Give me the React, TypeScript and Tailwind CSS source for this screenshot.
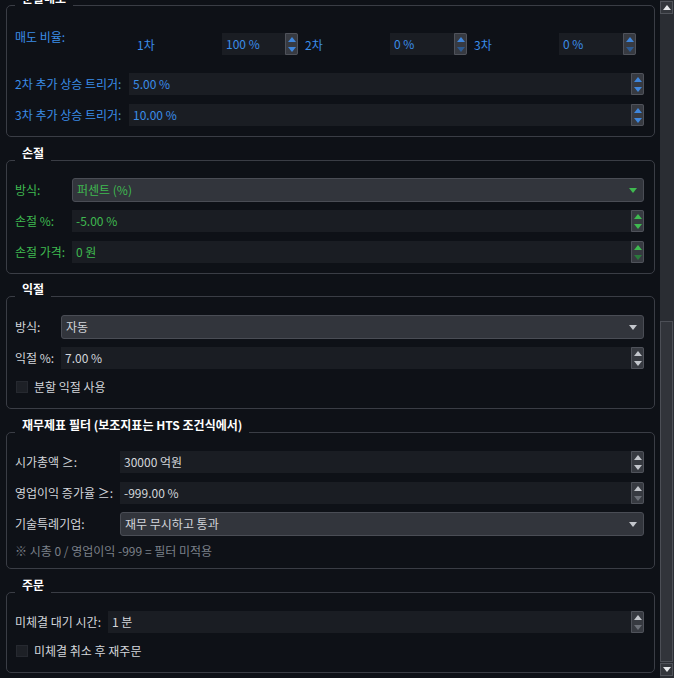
import React from "react"

type Tone = "blue" | "green" | "gray"

const textTone: Record<Tone, string> = {
  blue: "text-[#3b8de8]",
  green: "text-[#3fb950]",
  gray: "text-[#d3d6db]",
}

const arrowOn: Record<Tone, string> = {
  blue: "#3f86dc",
  green: "#3fb950",
  gray: "#c3c6cc",
}

const arrowOff: Record<Tone, string> = {
  blue: "#2c5a92",
  green: "#2a7a3c",
  gray: "#6c7078",
}

function Tri({ up, color }: { up?: boolean; color: string }) {
  return (
    <svg width="8" height="5" viewBox="0 0 8 5" className="block">
      <polygon points={up ? "0,5 8,5 4,0" : "0,0 8,0 4,5"} fill={color} />
    </svg>
  )
}

function Spin({ value, tone, downOff, upOff, className = "" }: { value: string; tone: Tone; downOff?: boolean; upOff?: boolean; className?: string }) {
  return (
    <div className={`flex h-[22px] bg-[#1a1d23] ${className}`}>
      <div className={`flex-1 flex items-center pl-[4px] ${textTone[tone]}`}>{value}</div>
      <div className="w-[13px] h-full flex flex-col items-center justify-center gap-[5px] bg-[#373a41] border border-[#4f525a] rounded-r-[2px]">
        <Tri up color={upOff ? arrowOff[tone] : arrowOn[tone]} />
        <Tri color={downOff ? arrowOff[tone] : arrowOn[tone]} />
      </div>
    </div>
  )
}

function Combo({ value, tone }: { value: string; tone: Tone }) {
  return (
    <div className={`flex-1 flex items-center h-[24px] pl-[4px] pr-[6px] bg-[#32353c] border border-[#4a4d55] rounded-[3px] ${textTone[tone]}`}>
      <span className="flex-1">{value}</span>
      <Tri color={arrowOn[tone]} />
    </div>
  )
}

function Group({ title, className = "", children }: { title: string; className?: string; children: React.ReactNode }) {
  return (
    <div className={`relative border border-[#3a3d45] rounded-[5px] pl-[8px] pr-[10px] ${className}`}>
      <div className="absolute left-[8px] top-[-16px] px-[7px] bg-[#0e1117] text-white font-bold leading-[16px]">{title}</div>
      {children}
    </div>
  )
}

function Row({ label, width, tone, children }: { label: string; width: string; tone: Tone; children: React.ReactNode }) {
  return (
    <div className="flex items-center">
      <div className={`${width} shrink-0 ${textTone[tone]}`}>{label}</div>
      {children}
    </div>
  )
}

function Check({ label }: { label: string }) {
  return (
    <div className="flex items-center h-[16px]">
      <div className="w-[12px] h-[12px] ml-[1px] bg-[#1d2026] border border-[#262930]" />
      <span className="ml-[6px] text-[#d3d6db]">{label}</span>
    </div>
  )
}

export default function App() {
  return (
    <div
      className="w-[674px] h-[678px] flex bg-[#0e1117] overflow-hidden text-[12px] leading-[16px]"
      style={{ fontFamily: "'Noto Sans CJK KR', 'Noto Sans', sans-serif" }}
    >
      <div className="w-[660px] pl-[6px] pr-[5px] pt-[5px]">
        <Group title="분할매도" className="pt-[27px] pb-[10px]">
          <div className="flex items-center h-[22px] text-[#3b8de8]">
            <div className="w-[122px] self-start -mt-[4px]">매도 비율:</div>
            <div className="w-[85px] pt-[2px]">1차</div>
            <Spin value="100 %" tone="blue" className="w-[76px]" />
            <div className="w-[85px] ml-[7px] pt-[2px]">2차</div>
            <Spin value="0 %" tone="blue" downOff className="w-[77px]" />
            <div className="w-[85px] ml-[7px] pt-[2px]">3차</div>
            <Spin value="0 %" tone="blue" downOff className="w-[77px]" />
          </div>
          <div className="mt-[18px] flex flex-col gap-[9px]">
            <Row label="2차 추가 상승 트리거:" width="w-[114px]" tone="blue">
              <Spin value="5.00 %" tone="blue" className="flex-1" />
            </Row>
            <Row label="3차 추가 상승 트리거:" width="w-[114px]" tone="blue">
              <Spin value="10.00 %" tone="blue" className="flex-1" />
            </Row>
          </div>
        </Group>

        <Group title="손절" className="mt-[23px] pt-[17px] pb-[10px]">
          <Row label="방식:" width="w-[57px]" tone="green">
            <Combo value="퍼센트 (%)" tone="green" />
          </Row>
          <div className="mt-[8px] flex flex-col gap-[9px]">
            <Row label="손절 %:" width="w-[57px]" tone="green">
              <Spin value="-5.00 %" tone="green" className="flex-1" />
            </Row>
            <Row label="손절 가격:" width="w-[57px]" tone="green">
              <Spin value="0 원" tone="green" downOff className="flex-1" />
            </Row>
          </div>
        </Group>

        <Group title="익절" className="mt-[22px] pt-[18px] pb-[13px]">
          <Row label="방식:" width="w-[46px]" tone="gray">
            <Combo value="자동" tone="gray" />
          </Row>
          <div className="mt-[8px]">
            <Row label="익절 %:" width="w-[46px]" tone="gray">
              <Spin value="7.00 %" tone="gray" className="flex-1" />
            </Row>
          </div>
          <div className="mt-[10px]">
            <Check label="분할 익절 사용" />
          </div>
        </Group>

        <Group title="재무제표 필터 (보조지표는 HTS 조건식에서)" className="mt-[23px] pt-[18px] pb-[9px]">
          <div className="flex flex-col gap-[9px]">
            <Row label="시가총액 ≥:" width="w-[105px]" tone="gray">
              <Spin value="30000 억원" tone="gray" className="flex-1" />
            </Row>
            <Row label="영업이익 증가율 ≥:" width="w-[105px]" tone="gray">
              <Spin value="-999.00 %" tone="gray" downOff className="flex-1" />
            </Row>
          </div>
          <div className="mt-[8px]">
            <Row label="기술특례기업:" width="w-[105px]" tone="gray">
              <Combo value="재무 무시하고 통과" tone="gray" />
            </Row>
          </div>
          <div className="mt-[7px] text-[#7b8089]">※ 시총 0 / 영업이익 -999 = 필터 미적용</div>
        </Group>

        <Group title="주문" className="mt-[23px] pt-[18px] pb-[13px]">
          <Row label="미체결 대기 시간:" width="w-[93px]" tone="gray">
            <Spin value="1 분" tone="gray" downOff className="flex-1" />
          </Row>
          <div className="mt-[10px]">
            <Check label="미체결 취소 후 재주문" />
          </div>
        </Group>
      </div>

      <div className="w-[14px] h-full flex flex-col bg-[#2a2d33] pt-[1px] pb-[2px]">
        <div className="w-[13px] h-[13px] flex items-center justify-center bg-[#33363c] border border-[#50535a]">
          <Tri up color="#e6e8eb" />
        </div>
        <div className="flex-1 flex flex-col">
          <div className="flex-1" />
          <div className="h-[341px] w-[13px] bg-[#31343a] border border-[#4c4f56]" />
        </div>
        <div className="w-[13px] h-[13px] mt-[1px] flex items-center justify-center bg-[#33363c] border border-[#50535a]">
          <Tri color="#e6e8eb" />
        </div>
      </div>
    </div>
  )
}
